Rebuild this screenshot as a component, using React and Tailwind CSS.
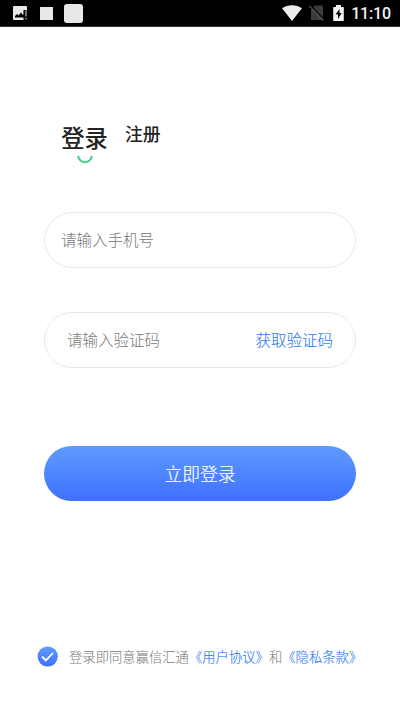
import { useState } from "react";

function StatusBar() {
  return (
    <div className="flex h-[26px] items-center justify-between border-b border-[#333] bg-black pl-[13px] pr-[9px] box-content">
      <div className="flex items-center">
        <svg className="h-[15px] w-[15px]" viewBox="0 0 15 15">
          <rect x="0" y="0" width="14" height="14" rx="1" fill="#e8e8e8" />
          <path d="M2 11.500V10l2-2 1.500 1.500L8 6.500l2 2.500 1-1v3.500z" fill="#000" />
          <path d="M10.500 4H15v11h-4.500z" fill="#000" />
          <path d="M12.500 4.500h1v6h-1zM12.500 12h1v1.500h-1z" fill="#e8e8e8" />
        </svg>
        <div className="ml-3 h-[13px] w-[13px] bg-[#e8e8e8]" />
        <div className="ml-[11px] h-[19px] w-[19px] rounded-[3px] bg-[#e8e8e8]" />
      </div>
      <div className="flex items-center">
        <svg className="h-4 w-5" viewBox="0 0 20 16">
          <path d="M0 3.300C5.800-.9 14.200-.9 20 3.300L10 16z" fill="#ececec" />
        </svg>
        <svg className="ml-[7px] h-4 w-[15px]" viewBox="0 0 15 16">
          <path d="M6 0.500H13a1 1 0 0 1 1 1V15H2V4.500z" fill="#3c3c3c" />
          <path d="M1.200 0.200l14 14.600" stroke="#000" strokeWidth="1.400" />
          <path d="M0.300 1l14 14.500" stroke="#555" strokeWidth="1.200" />
        </svg>
        <svg className="ml-[9px] h-4 w-[11px]" viewBox="0 0 11 16">
          <path d="M3 0h5v2h2a.8.8 0 0 1 .8.800v12.400a.8.800 0 0 1-.8.800H1a.8.8 0 0 1-.8-.8V2.800A.8.8 0 0 1 1 2h2z" fill="#f2f2f2" />
          <path d="M6.500 4L2.500 9.500h2.500V14l3.700-6H6.500z" fill="#000" />
        </svg>
        <span className="ml-[7px] pt-[2px] font-['Roboto',sans-serif] text-[16px] leading-none font-medium tracking-[-0.15px] text-[#f2f2f2]">
          11:10
        </span>
      </div>
    </div>
  );
}

function App() {
  const [phone, setPhone] = useState("");
  const [code, setCode] = useState("");
  const [agreed, setAgreed] = useState(true);

  return (
    <div className="flex h-[711px] w-[400px] flex-col overflow-hidden bg-white font-['Noto_Sans_CJK_SC',sans-serif] font-light">
      <StatusBar />

      {/* Tabs */}
      <div className="mt-[93px] flex h-[44px] pl-[61px] text-[#222]">
        <button type="button" className="flex w-[47px] flex-col items-center whitespace-nowrap">
          <span className="text-[23.3px] leading-[34px] font-medium">登录</span>
          <svg className="mt-px h-[9px] w-4" viewBox="0 0 16 9">
            <path d="M1.200 1C2.500 9.300 13.500 9.300 14.800 1" fill="none" stroke="#4bd08b" strokeWidth="2.200" />
          </svg>
        </button>
        <button type="button" className="ml-[17px] h-[26px] text-[17.8px] leading-[26px] font-medium">
          注册
        </button>
      </div>

      <form className="mt-[48px] px-[44px]" onSubmit={(e) => e.preventDefault()}>
        <div className="flex h-[56px] items-center rounded-full border border-[#e8e8e8] px-4">
          <input
            type="tel"
            value={phone}
            onChange={(e) => setPhone(e.target.value)}
            placeholder="请输入手机号"
            className="w-full text-[15.5px] text-[#333] outline-none placeholder:text-[#777]"
          />
        </div>

        <div className="mt-[44px] flex h-[56px] items-center rounded-full border border-[#e8e8e8] pr-[22px] pl-[22px]">
          <input
            type="text"
            value={code}
            onChange={(e) => setCode(e.target.value)}
            placeholder="请输入验证码"
            className="min-w-0 flex-1 text-[15.5px] text-[#333] outline-none placeholder:text-[#777]"
          />
          <button type="button" className="shrink-0 text-[15.5px] text-[#2f7afa] [-webkit-text-stroke:0.1px_#2f7afa]">
            获取验证码
          </button>
        </div>

        <button
          type="submit"
          className="mt-[78px] h-[55px] w-full rounded-full bg-linear-to-b from-[#5f9bff] to-[#3f6fff] text-[17.8px] text-white [-webkit-text-stroke:0.2px_#fff]"
        >
          立即登录
        </button>
      </form>

      {/* Agreement */}
      <div className="mt-[145px] flex h-[22px] items-center pl-[37px] text-[13.33px] whitespace-nowrap text-[#777]">
        <button type="button" onClick={() => setAgreed(!agreed)} className="mr-[11px] mb-[2px] shrink-0">
          <svg className="h-[21px] w-[21px]" viewBox="0 0 21 21">
            <defs>
              <linearGradient id="check" x1="0" y1="0" x2="0" y2="1">
                <stop offset="0" stopColor="#5f9bff" />
                <stop offset="1" stopColor="#3f6fff" />
              </linearGradient>
            </defs>
            <circle cx="10.700" cy="10.500" r="10.100" fill={agreed ? "url(#check)" : "#ddd"} />
            <path d="M5 10.500l3.900 3.900 7-7.400" fill="none" stroke="#fff" strokeWidth="1.800" />
          </svg>
        </button>
        <span>登录即同意赢信汇通</span>
        <a className="text-[#2f7afa] [-webkit-text-stroke:0.1px_#2f7afa]">《用户协议》</a>
        <span>和</span>
        <a className="text-[#2f7afa] [-webkit-text-stroke:0.1px_#2f7afa]">《隐私条款》</a>
      </div>
    </div>
  );
}

export default App;
